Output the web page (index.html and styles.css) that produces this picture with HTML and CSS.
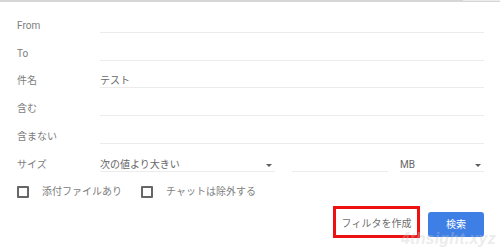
FILE: index.html
```html
<!DOCTYPE html>
<html lang="ja">
<head>
<meta charset="utf-8">
<link rel="stylesheet" href="styles.css">
</head>
<body>
<div class="topline"><span class="topline-light"></span></div>
<div class="form">
  <div class="row"><div class="label">From</div><div class="field"></div></div>
  <div class="row"><div class="label">To</div><div class="field"></div></div>
  <div class="row"><div class="label">件名</div><div class="field"><span class="value">テスト</span></div></div>
  <div class="row"><div class="label">含む</div><div class="field"></div></div>
  <div class="row"><div class="label">含まない</div><div class="field"></div></div>
  <div class="row">
    <div class="label">サイズ</div>
    <div class="size-group">
      <div class="field select sel-op"><span class="value">次の値より大きい</span><span class="arrow"></span></div>
      <div class="field sel-num"></div>
      <div class="field select sel-unit"><span class="value">MB</span><span class="arrow"></span></div>
    </div>
  </div>
  <div class="checks">
    <div class="check"><span class="box"></span><span class="check-text">添付ファイルあり</span></div>
    <div class="check"><span class="box"></span><span class="check-text">チャットは除外する</span></div>
  </div>
  <div class="actions">
    <div class="btn-filter">フィルタを作成</div>
    <div class="btn-search">検索</div>
  </div>
</div>
<div class="watermark">4thsight.xyz</div>
</body>
</html>
```
FILE: styles.css
```css
html, body {
  margin: 0;
  padding: 0;
  background: #ffffff;
}
body {
  width: 500px;
  height: 252px;
  position: relative;
  overflow: hidden;
  font-family: Roboto, "Noto Sans CJK JP", sans-serif;
  font-size: 10px;
  color: #7a7a7a;
}
.topline {
  height: 2px;
  background: #d6d6d6;
  display: flex;
  justify-content: flex-end;
}
.topline-light {
  width: 37px;
  height: 1px;
  background: #ececec;
}
.form {
  padding: 3px 16px 0 17px;
}
.row {
  display: flex;
  align-items: flex-end;
  height: 28px;
}
.row:nth-child(3) { height: 27px; }
.label {
  width: 83px;
  flex: none;
  line-height: 12px;
  padding-bottom: 1px;
  color: #7d7d7d;
}
.field {
  flex: 1;
  height: 28px;
  box-sizing: border-box;
  border-bottom: 1px solid #ececec;
  display: flex;
  align-items: flex-end;
  padding-bottom: 0;
}
.value {
  line-height: 12px;
  color: #666666;
}
.size-group {
  flex: 1;
  display: flex;
  align-items: flex-end;
}
.select {
  justify-content: space-between;
}
.sel-op {
  flex: none;
  width: 175px;
}
.sel-num {
  flex: none;
  width: 96px;
  margin-left: 17px;
}
.sel-unit {
  flex: none;
  width: 84px;
  margin-left: 12px;
}
.arrow {
  width: 0;
  height: 0;
  border-left: 3px solid transparent;
  border-right: 3px solid transparent;
  border-top: 3px solid #5f5f5f;
  margin: 0 3px 4px 0;
}
.checks {
  display: flex;
  align-items: center;
  height: 28px;
  margin-top: 6px;
}
.check {
  display: flex;
  align-items: center;
}
.check + .check {
  margin-left: 19px;
}
.box {
  width: 8px;
  height: 8px;
  border: 2px solid #666;
  border-radius: 1px;
}
.check-text {
  margin-left: 13px;
  line-height: 12px;
  color: #7d7d7d;
}
.actions {
  display: flex;
  justify-content: flex-end;
  align-items: flex-start;
}
.btn-filter {
  width: 81px;
  height: 26px;
  border: 3px solid #ee1111;
  display: flex;
  align-items: center;
  justify-content: center;
  color: #707070;
}
.btn-search {
  width: 56px;
  height: 25px;
  margin-left: 8px;
  margin-top: 6px;
  background: #3e7fe6;
  border-radius: 3px;
  color: #ffffff;
  display: flex;
  align-items: center;
  justify-content: center;
  line-height: 12px;
}
.watermark {
  position: absolute;
  left: 401px;
  top: 232px;
  line-height: 14px;
  font-family: "Liberation Sans", Arial, sans-serif;
  font-weight: bold;
  font-style: italic;
  font-size: 16px;
  color: rgba(200, 200, 200, 0.35);
  letter-spacing: 0.2px;
}
```
